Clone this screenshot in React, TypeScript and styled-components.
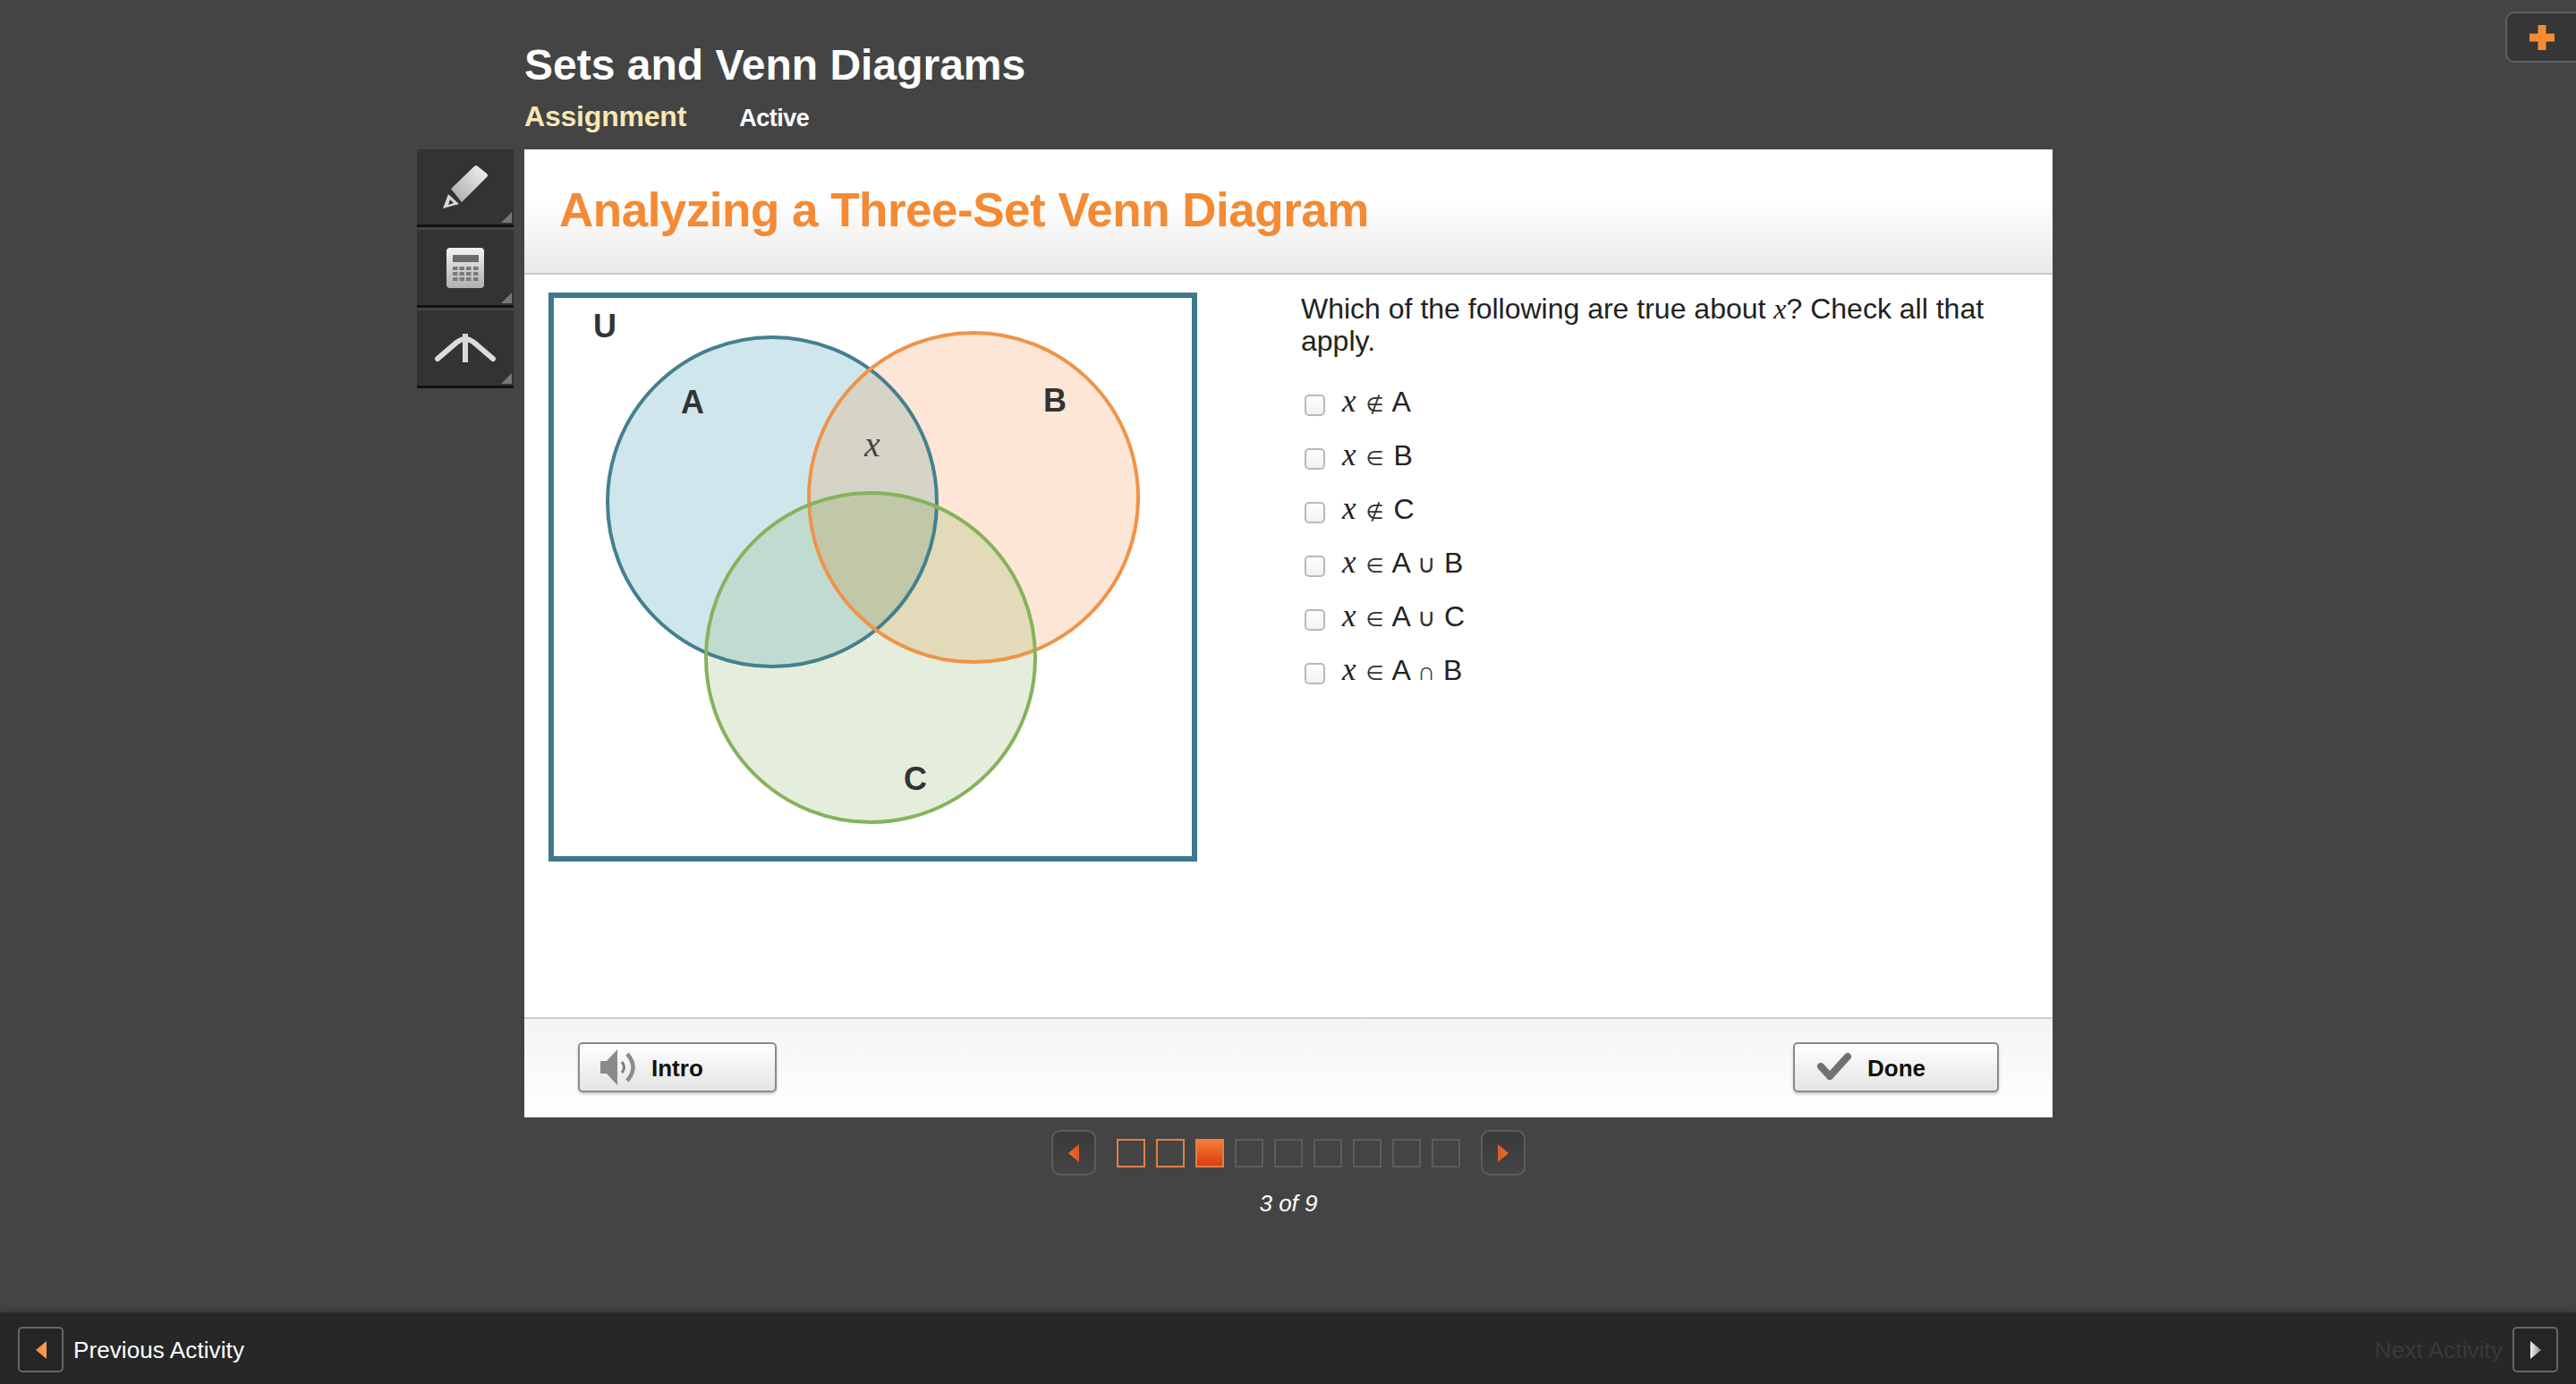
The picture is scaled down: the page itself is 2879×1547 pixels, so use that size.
import styled, { createGlobalStyle } from "styled-components";

const GlobalStyle = createGlobalStyle`
  html, body {
    margin: 0;
    padding: 0;
    background: #444444;
    font-family: "Liberation Sans", Arial, sans-serif;
  }
`;

const OPTIONS = [
  { rel: "∉", left: "A" },
  { rel: "∈", left: "B" },
  { rel: "∉", left: "C" },
  { rel: "∈", left: "A", op: "∪", right: "B" },
  { rel: "∈", left: "A", op: "∪", right: "C" },
  { rel: "∈", left: "A", op: "∩", right: "B" },
];

const CIRCLE_A = { cx: 244, cy: 228, r: 184 };
const CIRCLE_B = { cx: 469, cy: 223, r: 184 };
const CIRCLE_C = { cx: 354, cy: 402, r: 184 };

const PencilIcon = () => (
  <svg width="52" height="50" viewBox="0 0 52 50">
    <defs>
      <linearGradient id="toolGrad" x1="1" y1="0" x2="0" y2="1">
        <stop offset="0" stopColor="#f6f6f6" />
        <stop offset="1" stopColor="#a6a6a6" />
      </linearGradient>
      <linearGradient id="toolGradDown" x1="0" y1="0" x2="0" y2="1">
        <stop offset="0" stopColor="#f2f2f2" />
        <stop offset="1" stopColor="#b0b0b0" />
      </linearGradient>
    </defs>
    <path d="M10 27 L36 2 Q38 0 40 2 L50 10 Q52 12 50 14 L22 42 Z" fill="url(#toolGrad)" />
    <path d="M7 33 L19 44 L1 49 Z M9 39 L7 45 L13 43 Z" fill="#d8d8d8" fillRule="evenodd" />
  </svg>
);

const CalculatorIcon = () => (
  <svg width="42" height="45" viewBox="0 0 42 45">
    <rect x="0" y="0" width="42" height="45" rx="4" fill="url(#toolGradDown)" />
    <rect x="7" y="8" width="29" height="8" fill="#6a6a6a" />
    {[21, 27, 33].map((y) =>
      [7, 14.5, 22, 30].map((x) => <rect key={`${x}-${y}`} x={x} y={y} width="5.5" height="4" fill="#7a7a7a" />)
    )}
  </svg>
);

const CompassIcon = () => (
  <svg width="68" height="36" viewBox="0 0 68 36">
    <path d="M3 30 L24 12 Q34 4 44 12 L65 30" fill="none" stroke="#dcdcdc" strokeWidth="6" strokeLinecap="round" />
    <path d="M34 2 V34" stroke="#d8d8d8" strokeWidth="6" />
  </svg>
);

const SpeakerIcon = () => (
  <svg width="40" height="40" viewBox="0 0 40 40">
    <path d="M0 13 H7 L19 0 V40 L7 27 H0 Z" fill="#8a8a8a" />
    <path d="M24 14 Q29 20 24 26" fill="none" stroke="#7c7c7c" strokeWidth="3" />
    <path d="M30 5 Q43 20 30 35" fill="none" stroke="#8c8c8c" strokeWidth="4.5" />
  </svg>
);

const CheckIcon = () => (
  <svg width="41" height="34" viewBox="-3 0 41 34">
    <path d="M3 16 L13 27 L33 5" fill="none" stroke="#717171" strokeWidth="8" strokeLinejoin="round" strokeLinecap="round" />
  </svg>
);

const Arrow = ({ dir, tone }: { dir: "left" | "right"; tone: "red" | "orange" | "grey" }) => {
  const stops = {
    red: ["#d9582b", "#ef6a2c"],
    orange: ["#f9a04d", "#f08a36"],
    grey: ["#f2f2f2", "#8a8a8a"],
  }[tone];
  const id = `arrow-${dir}-${tone}`;
  return (
    <svg width="12" height="20" viewBox="0 0 12 20">
      <defs>
        <linearGradient id={id} x1={dir === "left" ? "1" : "0"} y1="0" x2={dir === "left" ? "0" : "1"} y2="0">
          <stop offset="0" stopColor={stops[0]} />
          <stop offset="1" stopColor={stops[1]} />
        </linearGradient>
      </defs>
      <path d={dir === "left" ? "M12 0 V20 L0 10 Z" : "M0 0 V20 L12 10 Z"} fill={`url(#${id})`} />
    </svg>
  );
};

// overlaps are painted as their own clipped regions so each gets its exact tint
const VennDiagram = () => (
  <VennSvg viewBox="0 0 713 624">
    <defs>
      <clipPath id="clipA"><circle {...CIRCLE_A} /></clipPath>
      <clipPath id="clipB"><circle {...CIRCLE_B} /></clipPath>
    </defs>
    <circle {...CIRCLE_A} fill="#cfe6ec" />
    <circle {...CIRCLE_B} fill="#fde6d6" />
    <circle {...CIRCLE_C} fill="#e5eedc" />
    <circle {...CIRCLE_B} fill="#d5d4c6" clipPath="url(#clipA)" />
    <circle {...CIRCLE_C} fill="#c0dcd0" clipPath="url(#clipA)" />
    <circle {...CIRCLE_C} fill="#e2dab8" clipPath="url(#clipB)" />
    <g clipPath="url(#clipA)">
      <circle {...CIRCLE_C} fill="#c0c8a8" clipPath="url(#clipB)" />
    </g>
    <circle {...CIRCLE_A} fill="none" stroke="#44808f" strokeWidth="4" />
    <circle {...CIRCLE_B} fill="none" stroke="#ee9448" strokeWidth="4" />
    <circle {...CIRCLE_C} fill="none" stroke="#85b35c" strokeWidth="4" />
    <VennLabel x="57" y="44">U</VennLabel>
    <VennLabel x="155" y="129">A</VennLabel>
    <VennLabel x="560" y="127">B</VennLabel>
    <VennLabel x="404" y="550">C</VennLabel>
    <VennVar x="356" y="177">x</VennVar>
  </VennSvg>
);

const Squares = Array.from({ length: 9 }, (_, i) => (i < 2 ? "done" : i === 2 ? "current" : "todo"));

export default function App() {
  return (
    <Page>
      <GlobalStyle />
      <PlusButton>
        <svg width="28" height="28" viewBox="0 0 28 28">
          <path d="M9.5 0 H18.5 V9.5 H28 V18.5 H18.5 V28 H9.5 V18.5 H0 V9.5 H9.5 Z" fill="#f68b33" />
        </svg>
      </PlusButton>

      <Stage>
        <TitleBlock>
          <Title>Sets and Venn Diagrams</Title>
          <SubRow>
            <Kind>Assignment</Kind>
            <Status>Active</Status>
          </SubRow>
        </TitleBlock>

        <Toolbar>
          <ToolButton><PencilIcon /></ToolButton>
          <ToolButton><CalculatorIcon /></ToolButton>
          <ToolButton><CompassIcon /></ToolButton>
        </Toolbar>

        <Card>
          <CardHeader>
            <Heading>Analyzing a Three-Set Venn Diagram</Heading>
          </CardHeader>
          <CardBody>
            <VennFrame>
              <VennDiagram />
            </VennFrame>
            <QuestionColumn>
              <Question>
                Which of the following are true about <MathVar>x</MathVar>? Check all that apply.
              </Question>
              <OptionList>
                {OPTIONS.map((opt, i) => (
                  <OptionRow key={i}>
                    <CheckBox />
                    <OptionText>
                      <OptionVar>x</OptionVar> <Relation>{opt.rel}</Relation> {opt.left}
                      {opt.op && (
                        <>
                          {" "}
                          <SetOperator>{opt.op}</SetOperator> {opt.right}
                        </>
                      )}
                    </OptionText>
                  </OptionRow>
                ))}
              </OptionList>
            </QuestionColumn>
          </CardBody>
          <CardFooter>
            <FooterButton $width={222}>
              <SpeakerIcon />
              <ButtonLabel>Intro</ButtonLabel>
            </FooterButton>
            <FooterButton $width={230}>
              <CheckIcon />
              <ButtonLabel>Done</ButtonLabel>
            </FooterButton>
          </CardFooter>
        </Card>

        <PagerBlock>
          <Pager>
            <PagerArrow><Arrow dir="left" tone="red" /></PagerArrow>
            <SquareRow>
              {Squares.map((state, i) => (
                <Square key={i} $state={state} />
              ))}
            </SquareRow>
            <PagerArrow><Arrow dir="right" tone="red" /></PagerArrow>
          </Pager>
          <PageCount>3 of 9</PageCount>
        </PagerBlock>
      </Stage>

      <BottomBar>
        <ActivityLink>
          <ActivityArrow><Arrow dir="left" tone="orange" /></ActivityArrow>
          <ActivityLabel>Previous Activity</ActivityLabel>
        </ActivityLink>
        <ActivityLink $disabled>
          <ActivityLabel>Next Activity</ActivityLabel>
          <ActivityArrow><Arrow dir="right" tone="grey" /></ActivityArrow>
        </ActivityLink>
      </BottomBar>
    </Page>
  );
}

const Page = styled.div`
  position: relative;
  display: flex;
  flex-direction: column;
  width: 2879px;
  height: 1547px;
  overflow: hidden;
  background: #444444;
`;

const PlusButton = styled.div`
  position: absolute;
  top: 13px;
  right: -12px;
  display: flex;
  align-items: center;
  padding-left: 25px;
  width: 91px;
  height: 57px;
  box-sizing: border-box;
  background: #363636;
  border: 2px solid #59626a;
  border-radius: 10px;
`;

const Stage = styled.div`
  flex: 1;
  display: grid;
  grid-template-columns: 108px 1708px;
  grid-template-rows: 167px 1082px auto;
  column-gap: 12px;
  padding-left: 466px;
`;

const TitleBlock = styled.div`
  grid-column: 2;
  padding-top: 46px;
`;

const Title = styled.h1`
  margin: 0;
  font-size: 48px;
  line-height: 54px;
  font-weight: 700;
  color: #ffffff;
`;

const SubRow = styled.div`
  display: flex;
  align-items: baseline;
  gap: 59px;
  margin-top: 12px;
`;

const Kind = styled.span`
  font-size: 32px;
  font-weight: 700;
  color: #f9e7b4;
  letter-spacing: -0.2px;
`;

const Status = styled.span`
  font-size: 27px;
  font-weight: 700;
  color: #ffffff;
  letter-spacing: -0.5px;
`;

const Toolbar = styled.div`
  grid-column: 1;
  grid-row: 2;
  display: flex;
  flex-direction: column;
  gap: 3px;
`;

const ToolButton = styled.div`
  position: relative;
  display: flex;
  align-items: center;
  justify-content: center;
  height: 84px;
  background: #333333;
  border-bottom: 3px solid #111111;

  &::after {
    content: "";
    position: absolute;
    right: 2px;
    bottom: 2px;
    border-style: solid;
    border-width: 0 0 12px 12px;
    border-color: transparent transparent #777777 transparent;
  }
`;

const Card = styled.main`
  grid-column: 2;
  grid-row: 2;
  display: flex;
  flex-direction: column;
  background: #ffffff;
`;

const CardHeader = styled.header`
  display: flex;
  align-items: flex-start;
  height: 140px;
  padding: 35px 0 0 39px;
  box-sizing: border-box;
  background: linear-gradient(#ffffff 40%, #e9e9e9);
  border-bottom: 2px solid #c9c9c9;
`;

const Heading = styled.h2`
  margin: 0;
  font-size: 53px;
  line-height: 66px;
  font-weight: 700;
  color: #f48a33;
  letter-spacing: -0.5px;
`;

const CardBody = styled.div`
  flex: 1;
  display: flex;
  padding: 20px 0 0 27px;
`;

const VennFrame = styled.div`
  flex: none;
  width: 725px;
  height: 636px;
  box-sizing: border-box;
  border: 6px solid #3c7a8c;
`;

const VennSvg = styled.svg`
  display: block;
  width: 713px;
  height: 624px;
  background: #ffffff;
`;

const VennLabel = styled.text`
  font-family: "Liberation Sans", Arial, sans-serif;
  font-size: 36px;
  font-weight: 700;
  fill: #333333;
  text-anchor: middle;
`;

const VennVar = styled.text`
  font-family: "Liberation Serif", "Times New Roman", serif;
  font-size: 40px;
  font-style: italic;
  fill: #444444;
  text-anchor: middle;
`;

const QuestionColumn = styled.div`
  margin-left: 116px;
  width: 800px;
`;

const Question = styled.p`
  margin: 0;
  font-size: 32px;
  line-height: 36px;
  color: #222222;
`;

const MathVar = styled.span`
  font-family: "Liberation Serif", "Times New Roman", serif;
  font-style: italic;
`;

const OptionVar = styled(MathVar)`
  font-size: 35px;
`;

const OptionList = styled.div`
  display: flex;
  flex-direction: column;
  gap: 24px;
  margin-top: 36px;
`;

const OptionRow = styled.label`
  display: flex;
  align-items: center;
  gap: 19px;
  height: 36px;
  padding-left: 4px;
`;

const CheckBox = styled.span`
  flex: none;
  width: 23px;
  height: 24px;
  box-sizing: border-box;
  border: 2px solid #b9b9b9;
  border-radius: 5px;
  background: linear-gradient(#ffffff, #f1f1f1);
`;

const OptionText = styled.span`
  margin-bottom: 5px;
  font-size: 32px;
  line-height: 36px;
  color: #222222;
`;

const Relation = styled.span`
  margin: 0 2px;
  font-family: "DejaVu Sans", sans-serif;
  font-size: 23px;
  color: #333333;
`;

const SetOperator = styled.span`
  font-size: 28px;
  color: #333333;
`;

const CardFooter = styled.footer`
  display: flex;
  align-items: center;
  justify-content: space-between;
  height: 112px;
  padding: 0 60px 3px 60px;
  box-sizing: border-box;
  background: linear-gradient(#f4f4f4, #ffffff);
  border-top: 2px solid #cfcfcf;
`;

const FooterButton = styled.div<{ $width: number }>`
  display: flex;
  align-items: center;
  gap: 17px;
  width: ${(p) => p.$width}px;
  height: 56px;
  padding-left: 23px;
  box-sizing: border-box;
  border: 2px solid #8a8a8a;
  border-radius: 5px;
  background: linear-gradient(#ffffff, #e4e4e4);
  box-shadow: 0 2px 3px rgba(0, 0, 0, 0.2);
`;

const ButtonLabel = styled.span`
  padding-top: 4px;
  font-size: 26px;
  font-weight: 700;
  color: #111111;
`;

const PagerBlock = styled.div`
  grid-column: 2;
  grid-row: 3;
  display: flex;
  flex-direction: column;
  align-items: center;
  padding-top: 14px;
`;

const Pager = styled.div`
  display: flex;
  align-items: center;
  gap: 23px;
`;

const PagerArrow = styled.div`
  display: flex;
  align-items: center;
  justify-content: center;
  width: 50px;
  height: 51px;
  box-sizing: border-box;
  border: 2px solid #5c5c5c;
  border-radius: 10px;
  background: linear-gradient(#3a3a3a, #444444);
`;

const SquareRow = styled.div`
  display: flex;
  gap: 12px;
`;

const Square = styled.div<{ $state: string }>`
  width: 32px;
  height: 32px;
  box-sizing: border-box;
  border: 2px solid ${(p) => (p.$state === "todo" ? "#5c5c5c" : "#e0804a")};
  background: ${(p) => (p.$state === "current" ? "linear-gradient(#f97c34, #d93c10)" : "transparent")};
`;

const PageCount = styled.div`
  margin-top: 16px;
  font-size: 26px;
  font-style: italic;
  color: #ffffff;
`;

const BottomBar = styled.footer`
  display: flex;
  align-items: center;
  justify-content: space-between;
  height: 80px;
  padding: 3px 20px 0;
  box-sizing: border-box;
  background: #272727;
  box-shadow: 0 -3px 6px rgba(0, 0, 0, 0.2);
`;

const ActivityLink = styled.div<{ $disabled?: boolean }>`
  display: flex;
  align-items: center;
  gap: 11px;
  font-size: 26px;
  letter-spacing: 0.1px;
  color: ${(p) => (p.$disabled ? "#393939" : "#ffffff")};
`;

const ActivityLabel = styled.span`
  padding-top: 2px;
`;

const ActivityArrow = styled.div`
  display: flex;
  align-items: center;
  justify-content: center;
  width: 51px;
  height: 51px;
  box-sizing: border-box;
  border: 2px solid #666666;
  border-radius: 5px;
  background: #252525;
`;
